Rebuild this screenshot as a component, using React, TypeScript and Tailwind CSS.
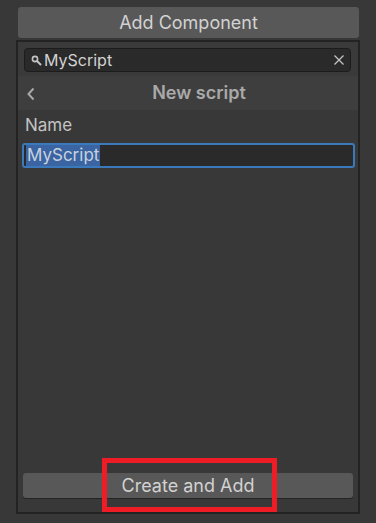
import React from 'react';

export default function App() {
  return <div className="relative w-[376px] h-[523px] overflow-hidden bg-[#383838] font-['Inter','Noto_Sans',sans-serif]">
      <div className="pt-[7px] pl-[18px]">
        <button className="w-[341px] h-[31px] rounded-[3px] bg-[#585858] text-[18px] leading-none text-[#d2d2d2] flex items-center justify-center">
          Add Component
        </button>
      </div>

      <div className="ml-[16px] mt-[2px] w-[344px] h-[474px] border-2 border-[#232323] flex flex-col bg-[#383838]">
        <div className="h-[34px] pt-[6px] pl-[6px] pr-[7px] bg-[#3a3a3a]">
          <div className="h-[24px] rounded-[4px] bg-[#2a2a2a] border border-[#1c1c1c] flex items-center pl-[6px] pr-[5px]">
            <svg width="11" height="11" viewBox="0 0 11 11" className="shrink-0">
              <circle cx="4" cy="4" r="2.6" fill="none" stroke="#c4c4c4" strokeWidth="1.6" />
              <path d="M6 6 L9.5 9.5" stroke="#c4c4c4" strokeWidth="2" strokeLinecap="round" />
            </svg>
            <span className="ml-[2px] text-[16px] leading-none text-[#d2d2d2] flex-1">MyScript</span>
            <svg width="12" height="12" viewBox="0 0 12 12" className="shrink-0">
              <path d="M1.5 1.5 L10.5 10.5 M10.5 1.5 L1.5 10.5" stroke="#c4c4c4" strokeWidth="1.3" />
            </svg>
          </div>
        </div>

        <div className="h-[34px] bg-[#3e3e3e] flex items-center relative">
          <svg width="10" height="14" viewBox="0 0 10 14" className="absolute left-[8px] top-[11px]">
            <path d="M7.5 1.5 L2.5 7 L7.5 12.5" fill="none" stroke="#a8a8a8" strokeWidth="2" />
          </svg>
          <span className="flex-1 text-center text-[18px] font-semibold leading-none text-[#a9a9a9] pl-[22px]">New script</span>
        </div>

        <div className="flex-1 flex flex-col px-[4px]">
          <div className="mt-[4px] pl-[3px] text-[17px] leading-[22px] text-[#c4c4c4]">Name</div>
          <div className="mt-[7px] h-[25px] w-[333px] rounded-[3px] border-2 border-[#3a79bb] bg-[#2a2a2a] flex items-center pl-[2px]">
            <span className="bg-[#3a64a2] text-[#c8d2de] text-[17px] leading-[21px] px-[1px]">MyScript</span>
          </div>

          <div className="flex-1" />

          <div className="pl-[1px] pb-[14px]">
            <button className="w-[330px] h-[25px] rounded-[3px] bg-[#585858] shadow-[0_1px_0_#242424] text-[18px] leading-none text-[#d2d2d2] flex items-center justify-center">
              Create and Add
            </button>
          </div>
        </div>
      </div>

      <div className="absolute left-[102px] top-[458px] w-[175px] h-[54px] border-[5px] border-[#ee1c24]" />
    </div>;
}
